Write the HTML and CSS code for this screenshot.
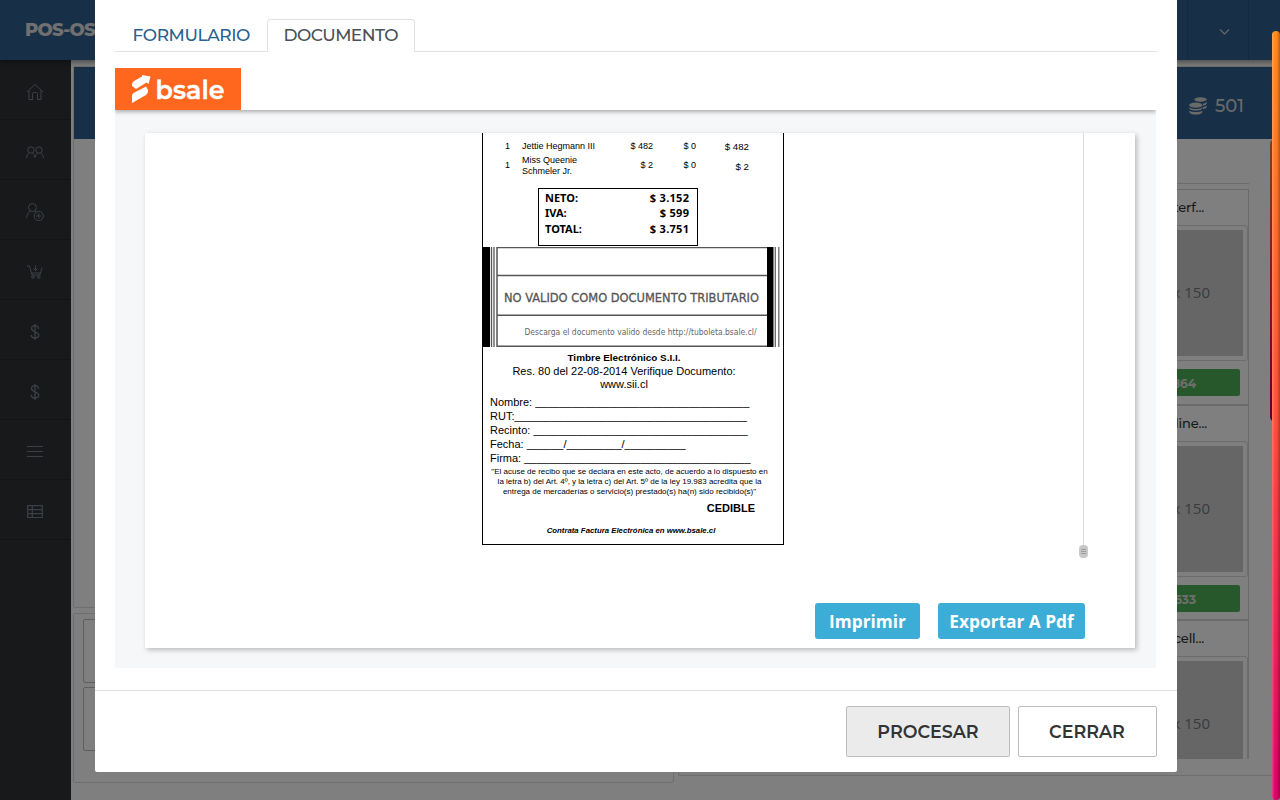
FILE: index.html
```html
<!DOCTYPE html>
<html lang="es">
<head>
<meta charset="utf-8">
<title>POS-OS</title>
<link rel="stylesheet" href="styles.css">
</head>
<body>
<div class="app">
  <header class="topbar">
    <div class="brand">POS-OS</div>
    <div class="top-cell"><svg width="11" height="8" viewBox="0 0 11 8"><path d="M1 1.5l4.500 4.500L10 1.500" fill="none" stroke="#c4c8cb" stroke-width="1.300"/></svg></div>
    <div class="top-end"></div>
  </header>
  <div class="shell">
    <nav class="sidebar">
      <a class="nav-item"><svg viewBox="0 0 18 18"><path d="M1 9L9 1.500 17 9M3 7.500V16.500H6.500V10.500Q6.500 9.500 7.500 9.500H10.500Q11.500 9.500 11.500 10.500V16.500H15V7.500"/></svg></a>
      <a class="nav-item"><svg viewBox="0 0 18 18"><circle cx="5" cy="7" r="3.200"/><circle cx="13" cy="7" r="3.200"/><path d="M.5 15Q.5 11.500 3.500 10M6.500 10Q8 11 9 14.500 10 11 11.500 10M14.500 10Q17.500 11.500 17.500 15"/></svg></a>
      <a class="nav-item"><svg viewBox="0 0 18 18"><circle cx="6.500" cy="4.500" r="4"/><path d="M.5 15Q.8 9.500 4.500 8M8.500 8L10 9"/><circle cx="12.800" cy="13" r="4.600"/><path d="M10.200 13H15.400M12.800 10.400V15.600"/></svg></a>
      <a class="nav-item"><svg viewBox="0 0 18 18"><path d="M1 3H3.500L6 12H14L16 4.500M5.500 10H14.500M9.500 2.500V7.500M7.500 5.500L9.500 7.500 11.500 5.500"/><circle cx="7" cy="14" r="1.300"/><circle cx="12.800" cy="14" r="1.300"/></svg></a>
      <a class="nav-item"><svg viewBox="0 0 18 18"><path d="M9 1V17M12.500 6C12.500 1.500 5.500 1.500 5.500 5.500S12.800 8.500 12.800 12 5.200 16.500 5.200 12" stroke-width="1.300"/></svg></a>
      <a class="nav-item"><svg viewBox="0 0 18 18"><path d="M9 1V17M12.500 6C12.500 1.500 5.500 1.500 5.500 5.500S12.800 8.500 12.800 12 5.200 16.500 5.200 12" stroke-width="1.300"/></svg></a>
      <a class="nav-item"><svg viewBox="0 0 18 18"><path d="M1 3.500H17M1 8.500H17M1 13.500H17"/></svg></a>
      <a class="nav-item"><svg viewBox="0 0 18 18"><path d="M1.700 2.700H16.300V14.500H1.700ZM6.300 2.700V14.500M1.700 6.700H16.300M1.700 10.600H16.300" stroke-width="1.200"/></svg></a>
    </nav>
    <main class="workspace">
      <div class="left-col">
        <section class="panel cart"><div class="panel-head"></div></section>
        <section class="panel totals"><div class="slot"></div><div class="slot"></div></section>
      </div>
      <section class="panel catalog">
        <div class="panel-head stock">
          <svg width="18" height="18" viewBox="0 0 18 18" fill="#d2d3d5"><ellipse cx="11.500" cy="2.500" rx="6.300" ry="2.200"/><path d="M14 6.800Q17 6.300 17.700 5V6.800Q17 8.300 14 8.800ZM14 10.300Q17 9.800 17.700 8.500V10.300Q17 11.800 14 12.300Z"/><ellipse cx="6.800" cy="8.200" rx="6.500" ry="2.600"/><path d="M.3 10.200Q2 12 6.800 12T13.300 10.200V11.500Q12 13.500 6.800 13.500T.3 11.500ZM.3 13.500Q2 15 6.800 15T13.300 13.500V15.200Q12 17.600 6.800 17.600T.3 15.200Z"/></svg>
          <span>501</span>
        </div>
        <div class="filter"></div>
        <div class="products">
          <article class="product"><h3>Cotton Interf...</h3><div class="frame"><div class="thumb">150 x 150</div></div><div class="price">$ 864</div></article>
          <article class="product inline"><h3>Cotton Inline...</h3><div class="frame"><div class="thumb">150 x 150</div></div><div class="price">$ 633</div></article>
          <article class="product"><h3>Small Excell...</h3><div class="frame"><div class="thumb">150 x 150</div></div></article>
        </div>
      </section>
    </main>
  </div>
  <div class="list-scroll"></div>
</div>

<div class="backdrop">
  <div class="modal">
    <div class="modal-body">
      <div class="tabs">
        <div class="tab tab-form">FORMULARIO</div>
        <div class="tab tab-doc">DOCUMENTO</div>
      </div>
      <div class="doc-view">
        <div class="doc-brand">
          <svg width="126" height="42" viewBox="0 0 126 42">
            <rect width="126" height="42" fill="#ff661e"/>
            <path d="M17 17Q17 14 19 13L27 8.500 27 7 35.500 8.500 33.500 16 31.500 14.500 21 21 17 18Q17 17.700 17 17ZM17 35V27.500Q17 26 18.500 25L31 18.500 33 22Q33.500 25 31 27Z" fill="#fff"/>
            <text x="40.500" y="31" textLength="69" lengthAdjust="spacingAndGlyphs" class="logo-text">bsale</text>
          </svg>
        </div>
        <div class="doc-area">
          <div class="sheet">
            <div class="scroll-frame">
              <div class="receipt">
                <div class="items">
                  <div class="item first"><span>1</span><span>Jettie Hegmann III</span><span>$ 482</span><span>$ 0</span><span class="sum">$ 482</span></div>
                  <div class="item second"><span>1</span><span>Miss Queenie<br>Schmeler Jr.</span><span>$ 2</span><span>$ 0</span><span class="sum">$ 2</span></div>
                </div>
                <div class="sums">
                  <div><span>NETO:</span><span>$ 3.152</span></div>
                  <div><span>IVA:</span><span>$ 599</span></div>
                  <div><span>TOTAL:</span><span>$ 3.751</span></div>
                </div>
                <svg class="stamp" width="300" height="100" viewBox="0 0 300 100">
                  <rect x="0" y="0" width="7" height="100" fill="#000"/>
                  <path d="M8.500 0V100M11 0V100" stroke="#555" stroke-width="1.300"/>
                  <path d="M14 .5H284M14 28.500H284M14 68.300H284M14 99.300H284M14 0V100" stroke="#555" stroke-width="1.500" fill="none"/>
                  <rect x="284" y="0" width="6.500" height="100" fill="#000"/>
                  <path d="M292.300 0V100M295.800 0V100" stroke="#666" stroke-width="1.300"/>
                  <text x="21" y="55" textLength="255" lengthAdjust="spacingAndGlyphs" class="stamp-main">NO VALIDO COMO DOCUMENTO TRIBUTARIO</text>
                  <text x="41.500" y="88" textLength="232" lengthAdjust="spacingAndGlyphs" class="stamp-sub">Descarga el documento valido desde http://tuboleta.bsale.cl/</text>
                </svg>
                <div class="sii"><b>Timbre Electrónico S.I.I.</b><div>Res. 80 del 22-08-2014 Verifique Documento:</div><div>www.sii.cl</div></div>
                <div class="fields">
                  <div>Nombre: ___________________________________</div>
                  <div>RUT:______________________________________</div>
                  <div>Recinto: ___________________________________</div>
                  <div>Fecha: ______/_________/__________</div>
                  <div>Firma: _____________________________________</div>
                </div>
                <div class="legal"><div>"El acuse de recibo que se declara en este acto, de acuerdo a lo dispuesto en</div><div>la letra b) del Art. 4º, y la letra c) del Art. 5º de la ley 19.983 acredita que la</div><div>entrega de mercaderías o servicio(s) prestado(s) ha(n) sido recibido(s)"</div></div>
                <div class="cedible">CEDIBLE</div>
                <div class="promo">Contrata Factura Electrónica en www.bsale.cl</div>
              </div>
              <svg class="grip" width="9" height="13" viewBox="0 0 9 13"><rect width="9" height="13" rx="4" fill="#c8c8c8"/><path d="M2 4.500H7M2 6.500H7M2 8.500H7" stroke="#969696" stroke-width=".9"/></svg>
            </div>
            <div class="doc-actions"><div class="blue print">Imprimir</div><div class="blue export">Exportar A Pdf</div></div>
          </div>
        </div>
      </div>
    </div>
    <footer class="modal-foot"><div class="btn process">PROCESAR</div><div class="btn close">CERRAR</div></footer>
  </div>
</div>
<div class="page-scroll"></div>
</body>
</html>
```
FILE: styles.css
```css
* { box-sizing: border-box; }
body { margin: 0; width: 1280px; height: 800px; overflow: hidden; background: #fff; font-family: Montserrat, Inter, "Liberation Sans", sans-serif; }
.app { width: 1280px; height: 800px; display: flex; flex-direction: column; overflow: hidden; }

.topbar { height: 60px; flex: none; display: flex; align-items: center; background: #2f5f8e; box-shadow: 0 2px 6px rgba(0,0,0,.45); position: relative; }
.brand { flex: 1; padding-left: 25px; color: #e0e0e0; font-size: 18px; font-weight: 800; letter-spacing: -.7px; }
.top-cell { width: 62px; height: 60px; border-left: 1px solid #29557f; border-right: 1px solid #29557f; padding: 3px 0 0 12px; display: flex; align-items: center; justify-content: center; }
.top-end { width: 31px; }
.shell { flex: 1; display: flex; min-height: 0; }
.sidebar { width: 71px; flex: none; background: #2f3236; }
.nav-item { height: 60px; display: flex; align-items: center; justify-content: center; border-bottom: 1px solid #27292d; padding-top: 4px; }
.nav-item svg { width: 18px; height: 18px; fill: none; stroke: #79818d; stroke-width: 1; margin-right: 1px; }
.workspace { flex: 1; display: flex; gap: 4px; padding: 6px 0 0 2px; min-width: 0; }
.left-col { width: 601px; flex: none; display: flex; flex-direction: column; gap: 5px; }
.panel { border: 1px solid #dcdcdc; border-radius: 2px; }
.panel-head { height: 72px; margin-bottom: 1px; background: #2f5f8e; }
.cart { height: 542px; }
.totals { height: 170px; padding: 5px 9px; display: flex; flex-direction: column; gap: 4px; }
.slot { height: 64px; border: 1px solid #bcbcbc; border-radius: 2px; }
.catalog { flex: 1; height: 710px; border-right: 0; display: flex; flex-direction: column; min-width: 0; }
.stock { flex: none; display: flex; align-items: center; justify-content: flex-end; gap: 8px; padding: 6px 36px 0 0; color: #d2d3d5; font-size: 18px; font-weight: 500; }
.filter { height: 44px; flex: none; border-bottom: 1px solid #d8d8d8; margin: 0 31px 5px 10px; }
.products { height: 570px; overflow: hidden; display: flex; flex-direction: column; align-items: flex-end; padding-right: 31px; }
.product { width: 150px; height: 215.500px; flex: none; border: 1px solid #d4d4d4; }
.product h3 { margin: 0; height: 35px; padding-right: 44px; text-align: right; line-height: 35px; font-size: 13px; font-weight: 500; letter-spacing: -.15px; color: #333; white-space: nowrap; }
.inline h3 { padding-right: 41px; }
.frame { height: 136px; border: 1px solid #d8d8d8; border-radius: 3px; padding: 4px; }
.thumb { height: 126px; background: #ccc; color: #777; display: flex; align-items: center; justify-content: flex-end; padding: 0 33px 2px 0; font: 15px "Open Sans", sans-serif; }
.price { height: 27px; margin: 8px 8px 0; border-radius: 2px; background: #4eb158; color: #ddd; text-align: right; padding-right: 44px; line-height: 29px; font-size: 12px; font-weight: 700; }
.list-scroll { position: absolute; left: 1270px; top: 140px; width: 8px; height: 281px; border-radius: 4px; background: linear-gradient(#ff8425, #e82050 70%, #c0005a); }

.backdrop { position: absolute; inset: 0; background: rgba(0,0,0,.5); overflow: hidden; }
.modal { width: 1082px; height: 772px; margin-left: 95px; background: #fff; border-radius: 0 0 2px 2px; display: flex; flex-direction: column; }
.modal-body { height: 690px; padding: 19px 20px 0; }
.tabs { height: 33px; border-bottom: 1px solid #dee2e6; display: flex; }
.tab { height: 33px; line-height: 32px; font-size: 17px; font-weight: 500; white-space: nowrap; }
.tab-form { width: 152px; padding-left: 17.500px; color: #296190; letter-spacing: -.4px; }
.tab-doc { width: 148px; padding-left: 15.500px; color: #495057; background: #fff; border: 1px solid #dee2e6; border-bottom: 0; border-radius: 4px 4px 0 0; line-height: 30px; letter-spacing: -.55px; }
.doc-view { margin-top: 16px; width: 1041px; height: 600px; background: #f5f7f9; }
.doc-brand { height: 42px; background: #fff; box-shadow: 0 2px 4px rgba(0,0,0,.3); clip-path: inset(0 0 -8px 0); }
.doc-brand svg { display: block; }
.logo-text { font: 600 25px Montserrat, Inter, sans-serif; fill: #fff; stroke: #fff; stroke-width: .4px; }
.doc-area { padding: 23px 21px 0 30px; }
.sheet { width: 990px; height: 515px; background: #fff; box-shadow: 2px 2px 5px rgba(0,0,0,.25); }
.scroll-frame { width: 939px; height: 418px; border-right: 1px solid #dcdcdc; padding-left: 337px; position: relative; }
.grip { position: absolute; right: -5px; bottom: -7px; }
.receipt { width: 302px; height: 412px; border: 1px solid #000; border-top: 0; display: flex; flex-direction: column; color: #000; font-family: "Liberation Sans", sans-serif; }
.items { height: 55px; flex: none; font-size: 9px; }
.item { display: grid; grid-template-columns: 39px 91px 40px 43px 53px; align-items: center; line-height: 11px; }
.item span:first-child { padding-left: 22px; }
.item span:nth-child(n+3) { text-align: right; }
.item .sum { font-size: 9.700px; padding-top: 1px; }
.first { height: 21px; padding-top: 5px; }
.second { height: 23px; }
.sums { flex: none; width: 160px; height: 58px; margin-left: 55px; border: 1px solid #000; padding: 1px 8px 0 6px; font: bold 11px/15.400px "Noto Sans", sans-serif; }
.sums div { display: flex; justify-content: space-between; }
.sums span:last-child { letter-spacing: .3px; margin-right: -.3px; }
.stamp { flex: none; margin: 1px 0; display: block; }
.stamp-main { font: 13px "DejaVu Sans Condensed", "DejaVu Sans", sans-serif; font-stretch: condensed; fill: #555; stroke: #555; stroke-width: .3px; }
.stamp-sub { font: 8.500px "DejaVu Sans Condensed", "DejaVu Sans", sans-serif; font-stretch: condensed; fill: #666; }
.sii { height: 47px; flex: none; padding: 2px 18px 0 0; text-align: center; font-size: 11px; line-height: 13px; }
.sii b { display: block; font-size: 9.950px; line-height: 15px; }
.fields { flex: none; height: 72px; padding-left: 7px; font-size: 11px; line-height: 14.100px; white-space: nowrap; }
.legal { flex: none; height: 30px; padding-right: 7px; text-align: center; font-size: 8px; line-height: 10px; white-space: nowrap; }
.cedible { flex: none; text-align: right; padding-right: 28px; font-size: 11px; font-weight: bold; line-height: 23px; }
.promo { flex: none; text-align: center; padding-right: 4px; font-size: 7.800px; font-weight: bold; font-style: italic; line-height: 22px; }
.doc-actions { margin-top: 52px; padding-right: 50px; display: flex; justify-content: flex-end; gap: 18px; }
.blue { height: 36px; border-radius: 3px; background: #3cadd7; color: #fff; text-align: center; font: 700 17.300px/37px "Open Sans", sans-serif; white-space: nowrap; }
.print { width: 105px; }
.export { width: 147px; }
.modal-foot { height: 82px; border-top: 1px solid #dee2e6; padding: 15px 20px; display: flex; justify-content: flex-end; gap: 8px; }
.btn { height: 51px; border: 1px solid #bdbdbd; border-radius: 2px; background: #fff; color: #333; text-align: center; font-size: 17.500px; font-weight: 600; line-height: 49px; }
.process { width: 164px; background: #ebebeb; }
.close { width: 139px; padding-right: 1px; }
.page-scroll { position: absolute; left: 1272px; top: 31px; width: 8px; height: 769px; border-radius: 4px; background: linear-gradient(90deg, rgba(255,255,255,.25), rgba(255,255,255,0) 35%, rgba(0,0,0,0) 60%, rgba(0,0,0,.3)), linear-gradient(#ff8a1c, #ff4f3a 50%, #dc0068); }
```
